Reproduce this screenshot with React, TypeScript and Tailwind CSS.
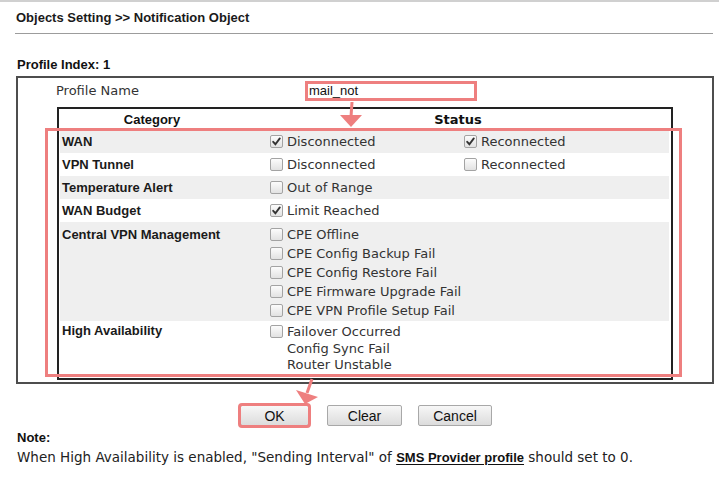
import React from 'react';

type Item = { label: string; checked?: boolean };
type Row = { category: string; col1: Item[]; col2?: Item[]; gray: boolean; h: string };

const rows: Row[] = [
  {
    category: 'WAN',
    col1: [{ label: 'Disconnected', checked: true }],
    col2: [{ label: 'Reconnected', checked: true }],
    gray: true,
    h: 'pt-[1px] pb-[2px]',
  },
  {
    category: 'VPN Tunnel',
    col1: [{ label: 'Disconnected' }],
    col2: [{ label: 'Reconnected' }],
    gray: false,
    h: 'py-[2px]',
  },
  { category: 'Temperature Alert', col1: [{ label: 'Out of Range' }], gray: true, h: 'py-[2px]' },
  { category: 'WAN Budget', col1: [{ label: 'Limit Reached', checked: true }], gray: false, h: 'py-[2px]' },
  {
    category: 'Central VPN Management',
    col1: [
      { label: 'CPE Offline' },
      { label: 'CPE Config Backup Fail' },
      { label: 'CPE Config Restore Fail' },
      { label: 'CPE Firmware Upgrade Fail' },
      { label: 'CPE VPN Profile Setup Fail' },
    ],
    gray: true,
    h: 'pt-[3px] pb-[1px]',
  },
];

const Checkbox = ({ checked }: { checked?: boolean }) => (
  <span className="relative inline-block w-[13px] h-[13px] shrink-0 rounded-[2px] border border-[#a3a3a3] bg-gradient-to-b from-[#fcfcfc] to-[#e2e2e2]">
    {checked && (
      <svg viewBox="0 0 13 13" className="absolute -left-px -top-px w-[13px] h-[13px]">
        <path d="M3.2 6.8 L5.4 9.2 L9.8 3.4" fill="none" stroke="#333" strokeWidth="1.9" strokeLinecap="round" />
      </svg>
    )}
  </span>
);

const StatusItem = ({ item }: { item: Item }) => (
  <div className="flex items-center h-[19px] gap-[4px] whitespace-nowrap">
    <Checkbox checked={item.checked} />
    <span>{item.label}</span>
  </div>
);

const Button = ({ label, w, red }: { label: string; w: string; red?: boolean }) => (
  <button
    className={`${w} h-[21px] rounded-[2px] border border-[#a8a8a8] bg-gradient-to-b from-[#f7f7f7] to-[#dcdcdc] text-[14px] leading-none text-[#111] font-['Liberation_Sans',Arial,sans-serif] ${
      red ? 'outline-[3px] outline-solid outline-[#ee7f7f] outline-offset-[-1px]' : ''
    }`}
  >
    {label}
  </button>
);

export default function App() {
  const verdana = "font-['DejaVu_Sans',Verdana,sans-serif]";
  const arial = "font-['Liberation_Sans',Arial,sans-serif]";

  return (
    <div className={`relative w-[719px] h-[481px] overflow-hidden bg-white text-[13px] text-[#222] ${arial}`}>
      <div className="h-[2px] bg-[#d0d0d0]" />
      <div className="h-[31px] pl-[16px] pt-[8px] font-bold leading-[16px] text-[#1a1a1a]">
        Objects Setting &gt;&gt; Notification Object
      </div>
      <div className="ml-[15px] w-[698px] h-px bg-[#9c9c9c]" />

      <div className="mt-[23px] pl-[17px] font-bold leading-[16px] text-[#111]">Profile Index: 1</div>

      <div className="mt-[3px] ml-[16px] w-[698px] h-[308px] border-2 border-[#4d4d4d]">
        <div className="mt-[3px] flex items-center h-[20px]">
          <div className={`w-[287px] pl-[38px] ${verdana} text-[#333]`}>Profile Name</div>
          <div className="w-[172px] h-[20px] border-[3px] border-[#ee7f7f] bg-white pl-[1px] leading-[14px] text-[13px] text-[#111]">
            mail_not
          </div>
        </div>

        <div className="mt-[6px] ml-[39px] w-[616px] h-[273px] border-2 border-[#222] overflow-hidden">
          <div className="flex h-[22px] items-center font-bold text-[#111]">
            <div className={`w-[186px] text-center ${arial}`}>Category</div>
            <div className={`flex-1 text-center ${verdana}`}>Status</div>
          </div>

          <div className={`ml-px mr-[2px] ${verdana} text-[#333]`}>
            {rows.map((r) => (
              <div key={r.category} className={`flex ${r.h} ${r.gray ? 'bg-[#efefef]' : 'bg-white'}`}>
                <div className={`w-[209px] shrink-0 pl-[2px] leading-[19px] font-bold text-[#1a1a1a] ${arial}`}>
                  {r.category}
                </div>
                <div className="w-[194px] shrink-0 pl-px">
                  {r.col1.map((it) => (
                    <StatusItem key={it.label} item={it} />
                  ))}
                </div>
                <div className="pl-[1px]">
                  {r.col2?.map((it) => (
                    <StatusItem key={it.label} item={it} />
                  ))}
                </div>
              </div>
            ))}

            <div className="flex pt-[1px] bg-white">
              <div className={`w-[209px] shrink-0 pl-[2px] leading-[17px] font-bold text-[#1a1a1a] ${arial}`}>
                High Availability
              </div>
              <div className="pl-px">
                <StatusItem item={{ label: 'Failover Occurred' }} />
                <div className="pl-[17px] leading-[16px]">Config Sync Fail</div>
                <div className="pl-[17px] leading-[16px]">Router Unstable</div>
              </div>
            </div>
          </div>
        </div>
      </div>

      <div className="mt-[21px] flex pl-[240px]">
        <Button label="OK" w="w-[69px]" red />
        <div className="ml-[18px]">
          <Button label="Clear" w="w-[75px]" />
        </div>
        <div className="ml-[16px]">
          <Button label="Cancel" w="w-[74px]" />
        </div>
      </div>

      <div className="mt-[4px] pl-[17px] font-bold leading-[16px] text-[#111]">Note:</div>
      <div className={`mt-[3px] pl-[17px] leading-[16px] text-[13.5px] text-[#222] whitespace-nowrap ${verdana}`}>
        When High Availability is enabled, "Sending Interval" of{' '}
        <span className={`font-bold text-[13px] underline underline-offset-2 text-[#111] ${arial}`}>SMS Provider profile</span>{' '}
        should set to 0.
      </div>

      {/* annotation highlight */}
      <div className="pointer-events-none absolute left-[45px] top-[128px] w-[637px] h-[249px] border-[3px] border-[#ee7f7f]" />
      <svg className="pointer-events-none absolute left-0 top-0" width="719" height="481">
        <line x1="352" y1="102" x2="351" y2="117" stroke="#ee7f7f" strokeWidth="3" />
        <polygon points="340,115 362,115 351,127" fill="#ee7f7f" />
        <line x1="312" y1="379" x2="307" y2="393" stroke="#ee7f7f" strokeWidth="3" />
        <polygon points="296,390 318,397 305,404" fill="#ee7f7f" />
      </svg>
    </div>
  );
}
